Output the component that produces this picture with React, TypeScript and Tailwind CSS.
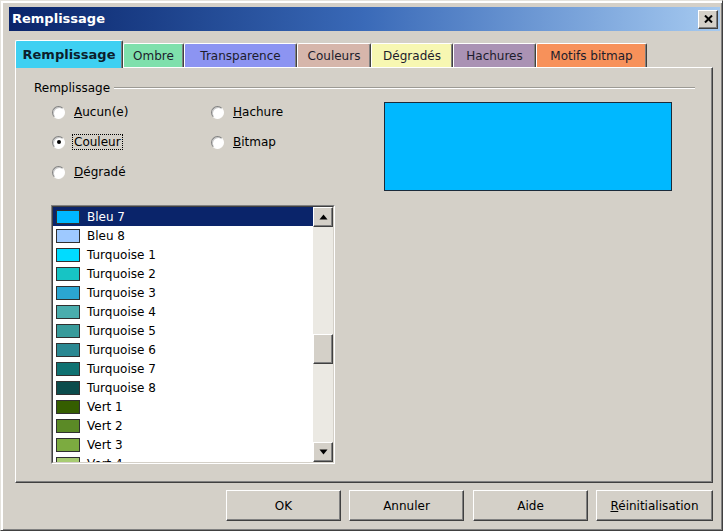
import React from "react";

const tabs = [
  { label: "Remplissage", w: "w-[108px]", bg: "bg-[#3fd0f2]", active: true },
  { label: "Ombre", w: "w-[61px]", bg: "bg-[#7fe0ac]" },
  { label: "Transparence", w: "w-[113px]", bg: "bg-[#8c94f2]" },
  { label: "Couleurs", w: "w-[74px]", bg: "bg-[#d6b6ab]" },
  { label: "Dégradés", w: "w-[82px]", bg: "bg-[#f7f7b2]" },
  { label: "Hachures", w: "w-[83px]", bg: "bg-[#aa92b4]" },
  { label: "Motifs bitmap", w: "w-[111px]", bg: "bg-[#f7915a]" },
];

const colours: [string, string][] = [
  ["Bleu 7", "#00b8ff"],
  ["Bleu 8", "#9ec9ff"],
  ["Turquoise 1", "#00dcff"],
  ["Turquoise 2", "#17c4c4"],
  ["Turquoise 3", "#2ba6d2"],
  ["Turquoise 4", "#4aadad"],
  ["Turquoise 5", "#389b9b"],
  ["Turquoise 6", "#2a8892"],
  ["Turquoise 7", "#0f7272"],
  ["Turquoise 8", "#0b4c4c"],
  ["Vert 1", "#355e00"],
  ["Vert 2", "#5b8a26"],
  ["Vert 3", "#7cab40"],
  ["Vert 4", "#a8cc72"],
];

const raised =
  "bg-[#d4d0c8] border border-t-white border-l-white border-r-[#404040] border-b-[#404040] shadow-[inset_-1px_-1px_0_#808080]";

const Radio: React.FC<{ checked?: boolean; children: React.ReactNode }> = ({ checked, children }) => (
  <div className="flex items-center h-[30px] pl-px">
    <div className="w-[13px] h-[13px] rounded-full border border-t-[#808080] border-l-[#808080] border-r-white border-b-white bg-white flex items-center justify-center shadow-[inset_1px_1px_0_#c8c8c8]">
      {checked && <div className="w-[4px] h-[4px] rounded-full bg-black" />}
    </div>
    <div className="ml-[9px]">{children}</div>
  </div>
);

const Arrow: React.FC<{ up?: boolean }> = ({ up }) => (
  <svg width="9" height="6" viewBox="0 0 9 6">
    {up ? <polygon points="4.5,0.5 8.5,5.5 0.5,5.5" fill="#000" /> : <polygon points="0.5,0.5 8.5,0.5 4.5,5.5" fill="#000" />}
  </svg>
);

export default function App() {
  return (
    <div className="w-[723px] h-[531px] bg-[#d4d0c8] flex flex-col border border-t-[#e4e2dc] border-l-[#e4e2dc] border-r-[#404040] border-b-[#404040] shadow-[inset_2px_2px_0_#fff,inset_-1px_-1px_0_#808080] font-['DejaVu_Sans',sans-serif] text-[12px] text-black">
      {/* title bar */}
      <div className="mt-[6px] ml-[8px] mr-[2px] h-[24px] flex items-center justify-between bg-gradient-to-r from-[#0a246a] via-[#3a6ab8] to-[#a6caf0]">
        <span className="pl-[3px] text-white font-bold text-[13px]">Remplissage</span>
        <div className={`${raised} mr-[2px] w-[20px] h-[19px] flex items-center justify-center`}>
          <svg width="9" height="8" viewBox="0 0 9 8">
            <path d="M1 0.5 L8 7.5 M8 0.5 L1 7.5" stroke="#000" strokeWidth="2" />
          </svg>
        </div>
      </div>

      <div className="ml-[14px] mr-[9px] flex flex-col">
        {/* tabs */}
        <div className="mt-[9px] h-[27px] flex items-end">
          {tabs.map((t) =>
            t.active ? (
              <div
                key={t.label}
                className={`${t.w} ${t.bg} h-[28px] -mb-px relative z-10 rounded-t-[2px] border-l border-t border-white border-r border-r-[#404040] shadow-[inset_-1px_0_0_#808080] flex items-center justify-center font-bold text-[13px] text-[#0c1e2c]`}
              >
                {t.label}
              </div>
            ) : (
              <div
                key={t.label}
                className={`${t.w} ${t.bg} h-[24px] rounded-t-[2px] border-l border-t border-white border-r border-r-[#404040] shadow-[inset_-1px_0_0_#808080] flex items-center justify-center text-[#1c1c2c]`}
              >
                {t.label}
              </div>
            )
          )}
        </div>

        {/* panel */}
        <div className="h-[416px] border border-t-white border-l-white border-r-[#404040] border-b-[#404040] shadow-[inset_-1px_-1px_0_#808080] pl-[18px] pt-[12px]">
          <div className="flex items-center h-[15px]">
            <span>Remplissage</span>
            <div className="flex-1 ml-[4px] mr-[17px] border-t border-t-[#9c9a94] border-b border-b-white" />
          </div>

          <div className="ml-[17px] mt-[2px] flex">
            <div className="w-[284px] flex flex-col">
              <div className="grid grid-cols-[159px_1fr]">
                <Radio>
                  <span><u>A</u>ucun(e)</span>
                </Radio>
                <Radio>
                  <span><u>H</u>achure</span>
                </Radio>
                <Radio checked>
                  <span className="border border-dotted border-black px-px -ml-[2px]">Couleur</span>
                </Radio>
                <Radio>
                  <span><u>B</u>itmap</span>
                </Radio>
                <Radio>
                  <span><u>D</u>égradé</span>
                </Radio>
              </div>

              {/* colour list */}
              <div className="mt-[18px] h-[259px] flex border border-t-[#808080] border-l-[#808080] border-r-white border-b-white">
                <div className="flex-1 flex border border-t-[#404040] border-l-[#404040] border-r-[#d4d0c8] border-b-[#d4d0c8] bg-white">
                  <div className="flex-1 overflow-hidden">
                    {colours.map(([name, c], i) => (
                      <div
                        key={name}
                        className={`h-[19px] flex items-center ${i === 0 ? "bg-[#0a246a] text-white" : ""}`}
                      >
                        <div
                          className="ml-[3px] w-[24px] h-[14px] border border-[#303030] shrink-0"
                          style={{ backgroundColor: c }}
                        />
                        <span className="ml-[7px]">{name}</span>
                      </div>
                    ))}
                  </div>
                  <div className="w-[20px] bg-[#ebe9e3] flex flex-col">
                    <div className={`${raised} h-[20px] flex items-center justify-center`}>
                      <Arrow up />
                    </div>
                    <div className="h-[107px]" />
                    <div className={`${raised} h-[30px]`} />
                    <div className="flex-1" />
                    <div className={`${raised} h-[20px] flex items-center justify-center`}>
                      <Arrow />
                    </div>
                  </div>
                </div>
              </div>
            </div>

            <div className="ml-[49px] mt-[5px] w-[288px] h-[89px] bg-[#00b8ff] border border-[#1a2a3a]" />
          </div>
        </div>

        {/* buttons */}
        <div className="mt-[7px] flex justify-end">
          <div className={`${raised} w-[115px] h-[31px] flex items-center justify-center`}>OK</div>
          <div className={`${raised} ml-[8px] w-[115px] h-[31px] flex items-center justify-center`}>Annuler</div>
          <div className={`${raised} ml-[9px] w-[115px] h-[31px] flex items-center justify-center`}>Aide</div>
          <div className={`${raised} ml-[8px] w-[117px] h-[31px] flex items-center justify-center`}>
            <span><u>R</u>éinitialisation</span>
          </div>
        </div>
      </div>
    </div>
  );
}
